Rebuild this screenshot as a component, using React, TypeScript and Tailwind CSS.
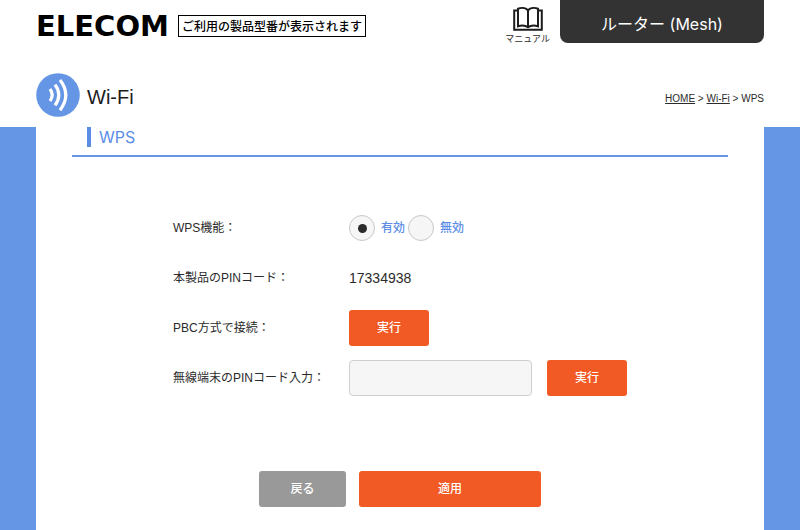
import { useState } from "react";

const solid =
  "h-9 shrink-0 rounded-[3px] text-xs font-medium text-white";

function BookIcon() {
  return (
    <svg viewBox="0 0 30 24" className="h-6 w-[30px]" fill="none" stroke="#1c1c1c" strokeWidth="2" aria-hidden="true">
      <path d="M5 3.5H1.2v19.3h27.6V3.500H25" />
      <path d="M15 3.200C12.500 0.700 8 0.600 5 1.700V19.300C8 18.300 12.500 18.500 15 20.200C17.500 18.500 22 18.300 25 19.300V1.700C22 0.600 17.500 0.700 15 3.200Z" />
      <path d="M15 3V20" />
    </svg>
  );
}

function WifiBadge() {
  return (
    <svg viewBox="0 0 44 44" className="size-11" aria-hidden="true">
      <circle cx="22" cy="22" r="21.800" fill="#6596e6" />
      <g fill="none" stroke="#fff" strokeWidth="3.200">
        <path d="M14 16Q18.400 21.800 14 28" />
        <path d="M19 11.600Q26.600 21.800 19 32.400" />
        <path d="M24 7Q35.600 21.800 24 37.200" />
      </g>
    </svg>
  );
}

function Choice({ id, label, checked, onChange }: { id: string; label: string; checked: boolean; onChange: () => void }) {
  return (
    <>
      <input
        type="radio"
        id={id}
        name="wps"
        checked={checked}
        onChange={onChange}
        className="grid size-[26px] shrink-0 appearance-none place-items-center rounded-full border border-[#c8c8c8] bg-[#f6f6f6] before:size-[9px] before:rounded-full checked:before:bg-[#2b2b2b]"
      />
      <label htmlFor={id} className="ml-[6px] mr-[3px] font-medium text-[#5b8de6]">
        {label}
      </label>
    </>
  );
}

export default function App() {
  const [enabled, setEnabled] = useState(true);
  const [pin, setPin] = useState("");

  return (
    <div className="flex min-h-screen flex-col bg-white font-['Liberation_Sans','Noto_Sans_CJK_JP',sans-serif] text-xs text-[#2b2b2b]">
      <header className="flex items-start px-9">
        <div className="flex h-[52px] items-center gap-[10px]">
          <div className="w-[132px] font-['DejaVu_Sans',sans-serif] text-[29px] leading-none font-bold text-black">ELECOM</div>
          <div className="flex h-[22px] items-center border border-black px-[3px] font-['Noto_Sans_CJK_JP',sans-serif] text-xs leading-none font-medium whitespace-nowrap text-black">
            ご利用の製品型番が表示されます
          </div>
        </div>
        <a href="#manual" className="mt-[7px] mr-[10px] ml-auto flex flex-col items-center text-[9px] leading-[16px] whitespace-nowrap">
          <BookIcon />
          マニュアル
        </a>
        <div className="flex h-[43px] w-[204px] items-center justify-center rounded-b-lg bg-[#333] pt-1 font-['Inter','Noto_Sans_CJK_JP',sans-serif] text-base leading-none text-white">
          ルーター (Mesh)
        </div>
      </header>

      <div className="flex h-[75px] items-center px-9 pt-[10px]">
        <WifiBadge />
        <h1 className="ml-[7px] pt-1 text-[20px] leading-none text-[#1c1c1c]">Wi-Fi</h1>
        <nav aria-label="breadcrumb" className="ml-auto pt-2 text-[10px]">
          <a href="#home" className="underline">HOME</a> &gt; <a href="#wifi" className="underline">Wi-Fi</a> &gt; WPS
        </nav>
      </div>

      <main className="flex flex-1 flex-col bg-[#6596e6] px-9">
        <div className="flex-1 bg-white px-9 pb-[23px]">
          <div className="border-b-2 border-[#6596e6] pb-2 pl-[15px]">
            <h2 className="border-l-4 border-[#5b8de6] pl-2 font-['Inter',sans-serif] text-base leading-5 text-[#5b8de6]">WPS</h2>
          </div>

          <form className="mx-auto mt-[53px] max-w-[454px]" onSubmit={(e) => e.preventDefault()}>
            <div className="grid grid-cols-[176px_minmax(0,1fr)] items-center gap-y-[14px]">
              <span>WPS機能：</span>
              <div role="radiogroup" aria-label="WPS機能" className="flex h-9 items-center">
                <Choice id="on" label="有効" checked={enabled} onChange={() => setEnabled(true)} />
                <Choice id="off" label="無効" checked={!enabled} onChange={() => setEnabled(false)} />
              </div>

              <span>本製品のPINコード：</span>
              <output className="h-9 text-sm leading-9">17334938</output>

              <span>PBC方式で接続：</span>
              <button type="button" className={`${solid} w-20 bg-[#f15a24]`}>実行</button>

              <label htmlFor="pin">無線端末のPINコード入力：</label>
              <div className="flex gap-[15px]">
                <input
                  id="pin"
                  value={pin}
                  onChange={(e) => setPin(e.target.value)}
                  className="h-9 w-full min-w-0 rounded border border-[#cfcfcf] bg-[#f6f6f6] px-2"
                />
                <button type="button" className={`${solid} w-20 bg-[#f15a24]`}>実行</button>
              </div>
            </div>

            <div className="mt-[75px] flex justify-center gap-[13px]">
              <button type="button" className={`${solid} w-[87px] bg-[#999]`}>戻る</button>
              <button type="submit" className={`${solid} w-[182px] bg-[#f15a24]`}>適用</button>
            </div>
          </form>
        </div>
      </main>
    </div>
  );
}
